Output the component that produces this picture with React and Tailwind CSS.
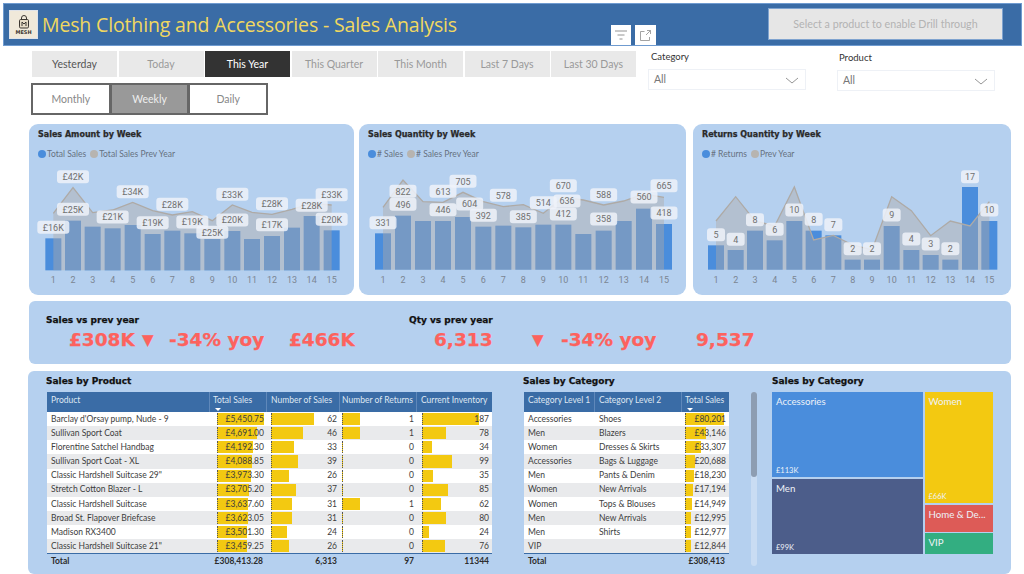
import React from 'react';

const SANS = "font-['Lato',sans-serif]";
const BLACK = "font-['DejaVu_Sans',sans-serif] font-bold [-webkit-text-stroke:0.25px_currentColor]";

const ranges = ['Yesterday', 'Today', 'This Year', 'This Quarter', 'This Month', 'Last 7 Days', 'Last 30 Days'];

const products = [
  ["Barclay d'Orsay pump, Nude - 9", 5450.75, 62, 1, 187],
  ['Sullivan Sport Coat', 4691.0, 46, 1, 78],
  ['Florentine Satchel Handbag', 4192.3, 33, 0, 34],
  ['Sullivan Sport Coat - XL', 4088.85, 39, 0, 99],
  ['Classic Hardshell Suitcase 29"', 3973.3, 26, 0, 35],
  ['Stretch Cotton Blazer - L', 3705.2, 37, 0, 85],
  ['Classic Hardshell Suitcase', 3637.6, 31, 1, 62],
  ['Broad St. Flapover Briefcase', 3623.05, 31, 0, 80],
  ['Madison RX3400', 3501.3, 24, 0, 24],
  ['Classic Hardshell Suitcase 21"', 3459.25, 26, 0, 76],
];

const categories = [
  ['Accessories', 'Shoes', 80201],
  ['Men', 'Blazers', 43146],
  ['Women', 'Dresses & Skirts', 33307],
  ['Accessories', 'Bags & Luggage', 20688],
  ['Men', 'Pants & Denim', 18230],
  ['Women', 'New Arrivals', 17194],
  ['Women', 'Tops & Blouses', 14949],
  ['Men', 'New Arrivals', 12995],
  ['Men', 'Shirts', 12977],
  ['VIP', '', 12844],
];

// chart numbers are read off the 3x crops, origin is the crop corner
const charts = [
  {
    title: 'Sales Amount by Week',
    legend: ['Total Sales', 'Total Sales Prev Year'],
    left: 29, width: 325, ox: 20,
    xs: [100, 159, 218, 278, 338, 398, 457, 517, 577, 637, 696, 756, 816, 875, 935],
    tops: [355, 302, 320, 325, 315, 342, 332, 340, 357, 333, 357, 348, 323, 288, 331],
    line: [280, 203, 278, 270, 247, 272, 285, 275, 302, 255, 277, 283, 268, 250, 255],
    base: 451, pill: 32,
    labels: [['£42K', 159, 170], ['£25K', 159, 268], ['£16K', 100, 322], ['£21K', 278, 291], ['£34K', 338, 215], ['£19K', 398, 308], ['£28K', 457, 253], ['£19K', 517, 306], ['£25K', 577, 337], ['£33K', 637, 223], ['£20K', 637, 300], ['£28K', 756, 251], ['£17K', 756, 314], ['£28K', 875, 256], ['£33K', 935, 224], ['£20K', 935, 298]],
  },
  {
    title: 'Sales Quantity by Week',
    legend: ['# Sales', '# Sales Prev Year'],
    left: 359, width: 327, ox: 355,
    xs: [84, 144, 204, 264, 324, 385, 445, 505, 565, 625, 685, 746, 806, 867, 927],
    tops: [340, 287, 303, 303, 291, 320, 317, 322, 314, 314, 342, 332, 303, 266, 312],
    line: [262, 180, 245, 247, 217, 245, 260, 254, 280, 232, 240, 255, 243, 222, 232],
    base: 449, pill: 27,
    labels: [['331', 84, 308], ['822', 144, 214], ['496', 144, 253], ['613', 264, 214], ['446', 264, 269], ['705', 324, 184], ['604', 344, 252], ['392', 385, 286], ['578', 445, 226], ['385', 505, 290], ['514', 565, 248], ['670', 625, 197], ['636', 636, 243], ['412', 625, 282], ['588', 746, 224], ['358', 746, 297], ['560', 867, 231], ['665', 927, 197], ['418', 927, 279]],
  },
  {
    title: 'Returns Quantity by Week',
    legend: ['# Returns', 'Prev Year'],
    left: 693, width: 318, ox: 690,
    xs: [78, 137, 195, 254, 313, 371, 430, 488, 546, 605, 664, 722, 781, 840, 898],
    tops: [376, 390, 332, 361, 303, 332, 346, 419, 419, 318, 390, 405, 419, 201, 303],
    line: [303, 230, 303, 318, 201, 360, 346, 375, 390, 230, 272, 347, 303, 318, 245],
    base: 449, pill: 18,
    labels: [['5', 78, 344], ['4', 137, 358], ['8', 195, 299], ['6', 254, 328], ['10', 313, 270], ['8', 371, 298], ['7', 430, 314], ['2', 488, 386], ['2', 546, 386], ['9', 605, 285], ['4', 664, 357], ['3', 722, 372], ['2', 781, 386], ['17', 840, 170], ['10', 898, 270]],
  },
];

function ChartCard({ chart, className }) {
  const px = (z) => chart.ox + z / 3;
  const py = (z) => 120 + z / 3;
  const linePts = chart.xs.map((x, i) => `${px(x)},${py(chart.line[i])}`).join(' ');
  const baseY = py(chart.base);
  const areaPts = `${px(chart.xs[0])},${baseY} ${linePts} ${px(chart.xs[14])},${baseY}`;

  return (
    <div className={`bg-[#b5d0ef] rounded-[9px] h-[171px] shrink-0 pt-[5px] ${className}`}>
      <div className={`${BLACK} text-[8px] leading-[12px] h-[12px] pl-[9px] text-[#2a2a2a]`}>{chart.title}</div>
      <div className={`${SANS} flex items-center mt-[7px] h-[12px] pl-[9px] text-[8.5px] text-[#66717f]`}>
        <span className="w-[8px] h-[8px] rounded-full bg-[#4a8ddc] mr-[1px]" />
        <span>{chart.legend[0]}</span>
        <span className="w-[8px] h-[8px] rounded-full bg-[#b7b4b0] ml-[4px] mr-[1px]" />
        <span>{chart.legend[1]}</span>
      </div>
      <svg
        width={chart.width}
        height={135}
        viewBox={`${chart.left} 160 ${chart.width} 135`}
        className="block"
      >
        {chart.xs.map((x, i) => (
          <rect key={i} x={px(x) - 8} y={py(chart.tops[i])} width={16} height={baseY - py(chart.tops[i])} fill="#4a8ddc" />
        ))}
        <polygon points={areaPts} fill="#b0aaa5" fillOpacity={0.42} />
        <polyline points={linePts} fill="none" stroke="#aeaaa6" strokeWidth={1.3} />
        {chart.xs.map((x, i) => (
          <text key={i} x={px(x)} y={283} textAnchor="middle" fontSize={9} fontFamily="Roboto, sans-serif" fill="#7b8592">
            {i + 1}
          </text>
        ))}
        {chart.labels.map(([text, x, y], i) => (
          <g key={i}>
            <rect x={px(x) - chart.pill / 2} y={py(y) - 6.5} width={chart.pill} height={13} rx={3} fill="#eef2f9" fillOpacity={0.85} />
            <text x={px(x)} y={py(y) + 3.2} textAnchor="middle" fontSize={9} fontFamily="Roboto, sans-serif" fill="#707070">
              {text}
            </text>
          </g>
        ))}
      </svg>
    </div>
  );
}

function Kpi({ className, children }) {
  return <span className={`absolute top-[27px] ${className}`}>{children}</span>;
}

function HeaderCell({ className, children, sorted }) {
  return (
    <div className={`relative h-full pl-[4px] pt-[2px] border-r border-[#5f88ba] last:border-r-0 whitespace-nowrap ${className}`}>
      {children}
      {sorted && <span className="absolute left-[5px] bottom-[1px] w-0 h-0 border-x-[3px] border-x-transparent border-t-[3px] border-t-white" />}
    </div>
  );
}

function BarCell({ className, barLeft, barWidth, children }) {
  return (
    <div className={`relative h-full flex items-center justify-end pr-[3px] ${className}`}>
      <span
        className="absolute top-[1px] bottom-[1px] bg-[#f3c911] border-l border-dotted border-l-[#555]"
        style={{ left: barLeft, width: barWidth }}
      />
      <span className="relative">{children}</span>
    </div>
  );
}

function ProductTable() {
  return (
    <div className={`${SANS} w-[445px] text-[8.5px] text-[#3d3d3d]`}>
      <div className="flex h-[20px] bg-[#3a6ca6] text-[#dfe7f2]">
        <HeaderCell className="w-[163px]">Product</HeaderCell>
        <HeaderCell className="w-[57px] !pl-[3px]" sorted>Total Sales</HeaderCell>
        <HeaderCell className="w-[73px]">Number of Sales</HeaderCell>
        <HeaderCell className="w-[77px] !pl-[2px]">Number of Returns</HeaderCell>
        <HeaderCell className="w-[75px]">Current Inventory</HeaderCell>
      </div>
      {products.map((p, i) => (
        <div key={p[0]} className={`flex h-[14.15px] ${i % 2 ? 'bg-[#e9eaec]' : 'bg-white'}`}>
          <div className="w-[163px] h-full flex items-center pl-[4px] whitespace-nowrap">{p[0]}</div>
          <BarCell className="w-[57px]" barLeft={7} barWidth={(p[1] / 5450.75) * 46.5}>
            £{p[1].toLocaleString('en-GB', { minimumFractionDigits: 2 })}
          </BarCell>
          <BarCell className="w-[73px]" barLeft={4} barWidth={p[2] * 0.687}>{p[2]}</BarCell>
          <BarCell className="w-[77px]" barLeft={2} barWidth={p[3] * 18}>{p[3]}</BarCell>
          <BarCell className="w-[75px]" barLeft={5} barWidth={p[4] * 0.305}>{p[4]}</BarCell>
        </div>
      ))}
      <div className="flex h-[15px] border-t border-[#3a6ca6] font-bold text-[#2c2c2c] items-center">
        <div className="w-[163px] pl-[4px]">Total</div>
        <div className="w-[57px] text-right pr-[4px]">£308,413.28</div>
        <div className="w-[73px] text-right pr-[3px]">6,313</div>
        <div className="w-[77px] text-right pr-[3px]">97</div>
        <div className="w-[75px] text-right pr-[3px]">11344</div>
      </div>
    </div>
  );
}

function CategoryTable() {
  return (
    <div className={`${SANS} w-[205px] text-[8.5px] text-[#3d3d3d]`}>
      <div className="flex h-[20px] bg-[#3a6ca6] text-[#dfe7f2]">
        <HeaderCell className="w-[71px]">Category Level 1</HeaderCell>
        <HeaderCell className="w-[87px]">Category Level 2</HeaderCell>
        <HeaderCell className="w-[47px] !pl-[3px]" sorted>Total Sales</HeaderCell>
      </div>
      {categories.map((c, i) => (
        <div key={c[0] + c[1]} className={`flex h-[14.15px] ${i % 2 ? 'bg-[#e9eaec]' : 'bg-white'}`}>
          <div className="w-[71px] h-full flex items-center pl-[4px]">{c[0]}</div>
          <div className="w-[87px] h-full flex items-center pl-[4px]">{c[1]}</div>
          <BarCell className="w-[47px]" barLeft={3} barWidth={(c[2] / 80201) * 39}>
            £{c[2].toLocaleString('en-GB')}
          </BarCell>
        </div>
      ))}
      <div className="flex h-[15px] border-t border-[#3a6ca6] font-bold text-[#2c2c2c] items-center">
        <div className="w-[158px] pl-[4px]">Total</div>
        <div className="w-[47px] text-right pr-[4px]">£308,413</div>
      </div>
    </div>
  );
}

function TreeTile({ className, name, value }) {
  return (
    <div className={`${SANS} relative px-[4px] pt-[2px] text-[9.7px] leading-[14px] text-[#eef2f8] whitespace-nowrap overflow-hidden ${className}`}>
      {name}
      {value && <span className="absolute left-[4px] bottom-[1px] text-[7.5px] leading-[10px]">{value}</span>}
    </div>
  );
}

function Dropdown({ label, className, labelClass }) {
  return (
    <div className={`w-[158px] ${className}`}>
      <div className={`text-[9.5px] leading-[12px] text-[#333] ${labelClass}`}>{label}</div>
      <div className="mt-[6px] h-[21px] border border-[#eef1f6] flex items-center justify-between pl-[5px] pr-[6px] pt-[1px] text-[10.5px] text-[#777]">
        <span>All</span>
        <svg width="14" height="7" viewBox="0 0 14 7" fill="none" stroke="#8a8a8a" strokeWidth="0.9">
          <path d="M1 1l6 5 6-5" />
        </svg>
      </div>
    </div>
  );
}

function Logo() {
  return (
    <div className="w-[29px] h-[29px] bg-[#f0e9da] border border-[#dfe3ea] flex flex-col items-center justify-center shrink-0">
      <svg width="14" height="14" viewBox="0 0 14 14" fill="none" stroke="#3b3630" strokeWidth="1">
        <path d="M4.5 4.5V3a2.5 2.5 0 015 0v1.5" />
        <rect x="2.5" y="4.5" width="9" height="8.5" rx="1.2" fill="#e7dcc6" />
        <path d="M5 11V7l2 2 2-2v4" />
      </svg>
      <span className="font-['DejaVu_Sans',sans-serif] font-bold text-[5px] leading-[6px] text-[#3b3630]">MESH</span>
    </div>
  );
}

export default function App() {
  return (
    <div className={`${SANS} w-[1024px] h-[574px] bg-white overflow-hidden pt-[3px]`}>
      {/* title bar */}
      <div className="ml-[3px] w-[1019px] h-[43px] bg-[#3a6ca6] border border-[#6f9bd0] flex items-center pl-[5px]">
        <Logo />
        <div className="ml-[4px] font-['Open_Sans',sans-serif] text-[19.5px] tracking-[-0.15px] leading-[30px] text-[#f1d85f] whitespace-nowrap w-[569px]">
          Mesh Clothing and Accessories - Sales Analysis
        </div>
        <div className="self-end flex gap-[4px]">
          <div className="w-[20px] h-[20px] bg-white flex items-center justify-center">
            <svg width="14" height="10" viewBox="0 0 14 10" fill="none" stroke="#888" strokeWidth="0.9">
              <path d="M1 1h12M3.5 5h7M5.5 9h3" />
            </svg>
          </div>
          <div className="w-[21px] h-[20px] bg-white flex items-center justify-center">
            <svg width="13" height="13" viewBox="0 0 13 13" fill="none" stroke="#999" strokeWidth="0.9">
              <path d="M5.5 2.5H1.5v9h9V8M8 1.5h3.5V5M11.5 1.5L7 6" />
            </svg>
          </div>
        </div>
        <div className="ml-[112px] w-[235px] h-[32px] self-start mt-[4px] bg-[#e6e6e6] border border-[#7fa3cf] flex items-center justify-center text-[10.7px] text-[#b3b3b3]">
          Select a product to enable Drill through
        </div>
      </div>

      {/* slicers */}
      <div className="flex mt-[5px] h-[64px]">
        <div className="ml-[31px] w-[617px]">
          <div className="flex gap-[1.5px] ml-[1px] h-[26px]">
            {ranges.map((r) => (
              <div
                key={r}
                className={`w-[85px] flex items-center justify-center pt-[1px] text-[10.5px] ${
                  r === 'This Year'
                    ? 'bg-[#333] text-white'
                    : r === 'Yesterday'
                      ? 'bg-[#e9e9e9] text-[#555]'
                      : 'bg-[#e9e9e9] text-[#999]'
                }`}
              >
                {r}
              </div>
            ))}
          </div>
          <div className="mt-[6px] w-[237px] h-[32px] bg-[#666] p-[2px] flex gap-[3px] text-[10.5px]">
            <div className="flex-1 bg-white flex items-center justify-center pt-[1px] text-[#888]">Monthly</div>
            <div className="flex-1 bg-[#999] flex items-center justify-center pt-[1px] text-[#eee]">Weekly</div>
            <div className="flex-1 bg-white flex items-center justify-center pt-[1px] text-[#888]">Daily</div>
          </div>
        </div>
        <Dropdown label="Category" labelClass="pl-[3px]" />
        <Dropdown label="Product" className="ml-[31px] mt-[1px]" labelClass="pl-[2px]" />
      </div>

      {/* weekly charts */}
      <div className="flex mt-[9px] ml-[29px]">
        <ChartCard chart={charts[0]} className="w-[325px]" />
        <ChartCard chart={charts[1]} className="w-[327px] ml-[5px]" />
        <ChartCard chart={charts[2]} className="w-[318px] ml-[7px]" />
      </div>

      {/* kpi strip */}
      <div className={`${BLACK} relative mt-[6px] ml-[29px] w-[982px] h-[63px] bg-[#b5d0ef] rounded-[6px] text-[18.5px] leading-[24px] text-[#fd625e]`}>
        <span className="absolute left-[17px] top-[13px] text-[9px] leading-[12px] text-[#111]">Sales vs prev year</span>
        <span className="absolute left-[380px] top-[13px] text-[9px] leading-[12px] text-[#111]">Qty vs prev year</span>
        <Kpi className="left-[40px]">£308K</Kpi>
        <Kpi className="left-[113px] text-[15px]">▼</Kpi>
        <Kpi className="left-[140px]">-34% yoy</Kpi>
        <Kpi className="left-[260px]">£466K</Kpi>
        <Kpi className="left-[405px]">6,313</Kpi>
        <Kpi className="left-[503px] text-[15px]">▼</Kpi>
        <Kpi className="left-[532px]">-34% yoy</Kpi>
        <Kpi className="left-[667px]">9,537</Kpi>
      </div>

      {/* tables and treemap */}
      <div className="flex mt-[7px] ml-[28px] w-[983px] h-[203px] bg-[#b5d0ef] rounded-[6px] pt-[3px]">
        <div className="ml-[19px]">
          <div className={`${BLACK} -ml-[1px] text-[9px] leading-[12px] h-[18px] pt-[1px] text-[#111]`}>Sales by Product</div>
          <ProductTable />
        </div>
        <div className="ml-[32px]">
          <div className={`${BLACK} -ml-[1px] text-[9px] leading-[12px] h-[18px] pt-[1px] text-[#111]`}>Sales by Category</div>
          <CategoryTable />
        </div>
        <div className="ml-[22px] mt-[18px] w-[6px] h-[174px] bg-[#c9dcf3] rounded-[3px]">
          <div className="h-[85px] bg-[#8d9db2] rounded-[3px]" />
        </div>
        <div className="ml-[15px]">
          <div className={`${BLACK} text-[9px] leading-[12px] h-[18px] pt-[1px] text-[#111]`}>Sales by Category</div>
          <div className="flex gap-[1.5px] w-[221px] h-[162px]">
            <div className="w-[151px] shrink-0 flex flex-col gap-[1.5px]">
              <TreeTile className="h-[85px] bg-[#4a8ddc]" name="Accessories" value="£113K" />
              <TreeTile className="flex-1 bg-[#4c5d8a]" name="Men" value="£99K" />
            </div>
            <div className="flex-1 min-w-0 flex flex-col gap-[1.5px]">
              <TreeTile className="h-[111px] bg-[#f3c911]" name="Women" value="£66K" />
              <TreeTile className="h-[27px] bg-[#dd5b57]" name="Home & De..." />
              <TreeTile className="flex-1 bg-[#33ae81]" name="VIP" />
            </div>
          </div>
        </div>
      </div>
    </div>
  );
}
